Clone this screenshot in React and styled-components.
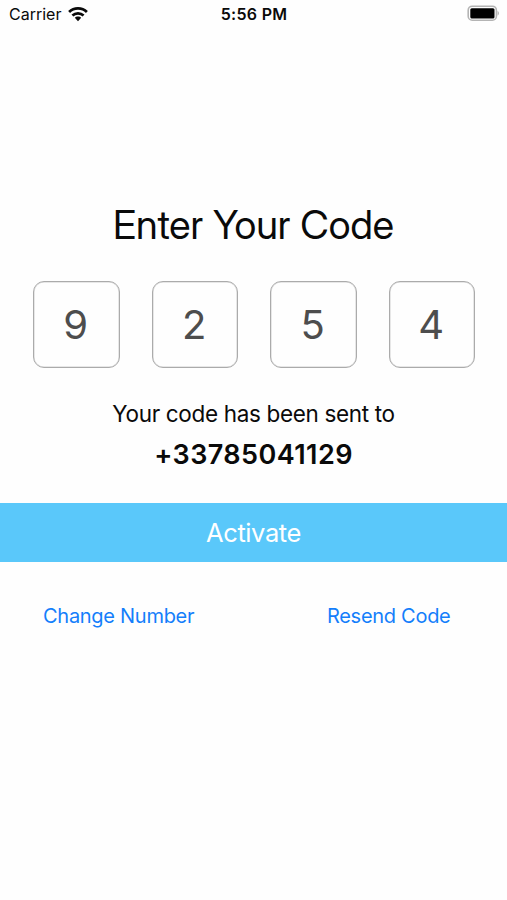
import { memo } from "react";
import styled, { createGlobalStyle } from "styled-components";

const GlobalStyle = createGlobalStyle`
  body {
    margin: 0px;
    background: #fefefe;
  }
`;

const Wrapper = styled.div`
  display: flex;
  flex-direction: column;
  height: 900px;
  overflow: hidden;
  background: #fefefe;
  color: #0a0a0a;
  font-family: Inter, "Liberation Sans", sans-serif;
`;

const StatusBar = styled.div`
  display: grid;
  grid-template-columns: 1fr auto 1fr;
  align-items: center;
  height: 28px;
  padding: 0px 8px 0px 9px;

  .Network {
    display: flex;
    align-items: center;
    gap: 7px;
  }

  .Battery {
    justify-self: end;
    margin-bottom: 1px;
  }
`;

const Text = styled.p`
  margin: 0px;
  text-align: center;
  white-space: nowrap;
  font-size: ${(props) => props.$size};
  font-weight: ${(props) => props.$weight || "400"};
  line-height: ${(props) => props.$line};
  letter-spacing: ${(props) => props.$spacing || "0px"};
`;

const Title = styled(Text)`
  font-family: "Inter Display", Inter, sans-serif;
  font-variation-settings: "opsz" 32;
`;

const Content = styled.div`
  display: flex;
  flex-direction: column;
  padding-top: 172px;
`;

const CodeRow = styled.div`
  display: flex;
  justify-content: space-between;
  padding: 31px 32px 25px 33px;
`;

const CodeBox = styled.div`
  display: flex;
  align-items: center;
  justify-content: center;
  box-sizing: border-box;
  width: 86.5px;
  height: 87px;
  padding-right: 1px;
  border: 1px solid #ababab;
  border-radius: 11px;
  box-shadow: inset 0px 0px 0px 0.5px #d0d0d0;
  color: #4d4d4d;
  font-size: 40px;
`;

const ActivateButton = styled.button`
  height: 59px;
  margin-top: 27px;
  padding: 0px;
  border: none;
  background: #5ac8fa;
  color: white;
  font-family: inherit;
  font-size: 25.5px;
  letter-spacing: -0.4px;
`;

const Links = styled.div`
  display: flex;
  justify-content: space-between;
  padding: 41px 56.5px 0px 43px;
`;

const LinkButton = styled.button`
  padding: 0px;
  border: none;
  background: none;
  color: #147efb;
  font-family: inherit;
  font-size: 20px;
  line-height: 26px;
  letter-spacing: -0.28px;
`;

const WifiIcon = () => (
  <svg width="20" height="15" viewBox="0 0 20 15" fill="none" stroke="#0a0a0a">
    <path d="M1.1 4.9C6 .3 14 .3 18.9 4.9" strokeWidth="2.8" />
    <path d="M4.4 8.5C7.5 5.6 12.5 5.6 15.6 8.5" strokeWidth="2.6" />
    <path
      d="M10 9.5c-1.3 0-2.4.5-3.2 1.3L10 14.2l3.2-3.4c-.8-.8-1.9-1.3-3.2-1.3z"
      fill="#0a0a0a"
      stroke="none"
    />
  </svg>
);

const BatteryIcon = () => (
  <svg className="Battery" width="32" height="17" viewBox="0 0 32 17">
    <rect
      x="1.2"
      y="1.2"
      width="28.2"
      height="14"
      rx="4"
      fill="none"
      stroke="#b4b4b4"
      strokeWidth="1.6"
    />
    <rect x="3.3" y="3.2" width="24.2" height="10.3" rx="1.5" fill="#000" />
    <path d="M30.6 6c1.6.7 1.6 3.8 0 4.5z" fill="#a8a8a8" />
  </svg>
);

const code = ["9", "2", "5", "4"];

const App = () => {
  return (
    <Wrapper>
      <GlobalStyle />
      <StatusBar>
        <div className="Network">
          <Text $size="16px" $line="28px">
            Carrier
          </Text>
          <WifiIcon />
        </div>
        <Text $size="16px" $weight="600" $line="28px" $spacing="0.3px">
          5:56 PM
        </Text>
        <BatteryIcon />
      </StatusBar>
      <Content>
        <Title $size="39.5px" $line="50px" $spacing="-0.03px">
          Enter Your Code
        </Title>
        <CodeRow>
          {code.map((digit, index) => (
            <CodeBox key={index}>{digit}</CodeBox>
          ))}
        </CodeRow>
        <Text $size="22.5px" $line="41px" $spacing="-0.34px">
          Your code has been sent to
        </Text>
        <Text $size="27px" $weight="600" $line="42px" $spacing="0.42px">
          +33785041129
        </Text>
        <ActivateButton>Activate</ActivateButton>
        <Links>
          <LinkButton>Change Number</LinkButton>
          <LinkButton>Resend Code</LinkButton>
        </Links>
      </Content>
    </Wrapper>
  );
};

export default memo(App);
